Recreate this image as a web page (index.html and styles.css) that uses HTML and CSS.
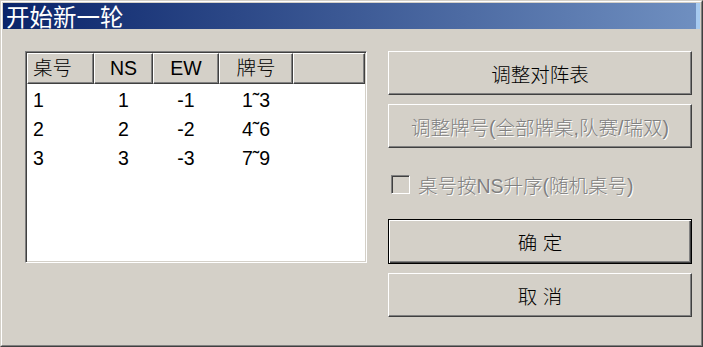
FILE: index.html
```html
<!DOCTYPE html>
<html lang="zh-CN">
<head>
    <meta charset="UTF-8">
    <title>开始新一轮</title>
    <link rel="stylesheet" href="styles.css">
</head>
<body>
    <div class="window">
        <div class="frame">
            <div class="titlebar"><span class="title-text">开始新一轮</span></div>
            <div class="content">
                <div class="listview">
                    <div class="lv-head">
                        <div class="hcell left">桌号</div>
                        <div class="hcell">NS</div>
                        <div class="hcell">EW</div>
                        <div class="hcell">牌号</div>
                        <div class="hcell"></div>
                    </div>
                    <div class="lv-row">
                        <div class="cell left">1</div>
                        <div class="cell">1</div>
                        <div class="cell">-1</div>
                        <div class="cell">1˜3</div>
                    </div>
                    <div class="lv-row">
                        <div class="cell left">2</div>
                        <div class="cell">2</div>
                        <div class="cell">-2</div>
                        <div class="cell">4˜6</div>
                    </div>
                    <div class="lv-row">
                        <div class="cell left">3</div>
                        <div class="cell">3</div>
                        <div class="cell">-3</div>
                        <div class="cell">7˜9</div>
                    </div>
                </div>
                <div class="actions">
                    <button type="button" class="btn">调整对阵表</button>
                    <button type="button" class="btn btn-gap" disabled>调整牌号(全部牌桌,队赛/瑞双)</button>
                    <label class="check disabled">
                        <span class="box"></span>
                        <span class="check-text">桌号按NS升序(随机桌号)</span>
                    </label>
                    <button type="button" class="btn btn-default">确 定</button>
                    <button type="button" class="btn btn-gap">取 消</button>
                </div>
            </div>
        </div>
    </div>
</body>
</html>
```

FILE: styles.css
```css
body {
    margin: 0;
    background: #d4d0c8;
    font-family: "Liberation Sans", "Noto Sans CJK SC", sans-serif;
    color: #000;
}
.window {
    width: 703px;
    height: 347px;
    box-sizing: border-box;
    border: 1px solid;
    border-color: #d4d0c8 #404040 #404040 #d4d0c8;
}
.frame {
    height: 100%;
    box-sizing: border-box;
    border: 1px solid;
    border-color: #fff #808080 #808080 #fff;
    padding: 1px;
}
.titlebar {
    height: 26px;
    display: flex;
    align-items: center;
    padding-left: 3px;
    background: linear-gradient(to right, #0a246a 0%, #6f8fc0 99.4%, #a6caf0 99.4%);
}
.title-text {
    color: #fff;
    font-family: "Noto Sans CJK SC", sans-serif;
    font-size: 23.5px;
    line-height: 24px;
}
.content {
    display: flex;
    padding: 22px 8px 0 22px;
}
.listview {
    width: 342px;
    height: 212px;
    box-sizing: border-box;
    border: 1px solid;
    border-color: #808080 #fff #fff #808080;
    box-shadow: inset 1px 1px #404040, inset -1px -1px #d4d0c8;
    background: #fff;
    padding: 1px;
    font-size: 19.5px;
}
.lv-head,
.lv-row {
    display: grid;
    grid-template-columns: 67px 59px 66px 74px 1fr;
}
.lv-head {
    height: 31px;
}
.hcell {
    background: #d4d0c8;
    border-top: 1px solid #fff;
    border-left: 1px solid #fff;
    border-right: 1px solid #404040;
    border-bottom: 1px solid #404040;
    box-shadow: inset -1px -1px #808080;
    text-align: center;
    line-height: 29px;
    font-weight: 300;
}
.hcell.left {
    text-align: left;
    padding-left: 5px;
}
.lv-row {
    height: 29px;
    line-height: 29px;
}
.lv-head + .lv-row {
    margin-top: 2px;
}
.cell {
    text-align: center;
}
.cell.left {
    text-align: left;
    padding-left: 6px;
}
.actions {
    display: flex;
    flex-direction: column;
    margin-left: 21px;
    width: 304px;
}
.btn {
    height: 44px;
    box-sizing: border-box;
    background: #d4d0c8;
    border: 1px solid;
    border-color: #fff #404040 #404040 #fff;
    box-shadow: inset -1px -1px #808080;
    font-family: "Liberation Sans", "Noto Sans CJK SC", sans-serif;
    font-size: 19.5px;
    font-weight: 300;
    color: #000;
    padding: 0;
}
.btn-gap {
    margin-top: 9px;
}
.btn:disabled {
    color: #808080;
    text-shadow: 1px 1px #fff;
}
.btn-default {
    margin-top: 25px;
    height: 45px;
    border: 1px solid #000;
    box-shadow: inset 1px 1px #fff, inset -1px -1px #404040, inset -2px -2px #808080;
}
.check {
    display: flex;
    align-items: center;
    margin-top: 27px;
    height: 19px;
    padding-left: 3px;
    font-size: 19.5px;
    font-weight: 300;
}
.box {
    width: 19px;
    height: 19px;
    box-sizing: border-box;
    border: 1px solid;
    border-color: #808080 #fff #fff #808080;
    box-shadow: inset 1px 1px #404040, inset -1px -1px #d4d0c8;
    background: #d4d0c8;
}
.check-text {
    margin-left: 8px;
    color: #808080;
    text-shadow: 1px 1px #fff;
}
```
